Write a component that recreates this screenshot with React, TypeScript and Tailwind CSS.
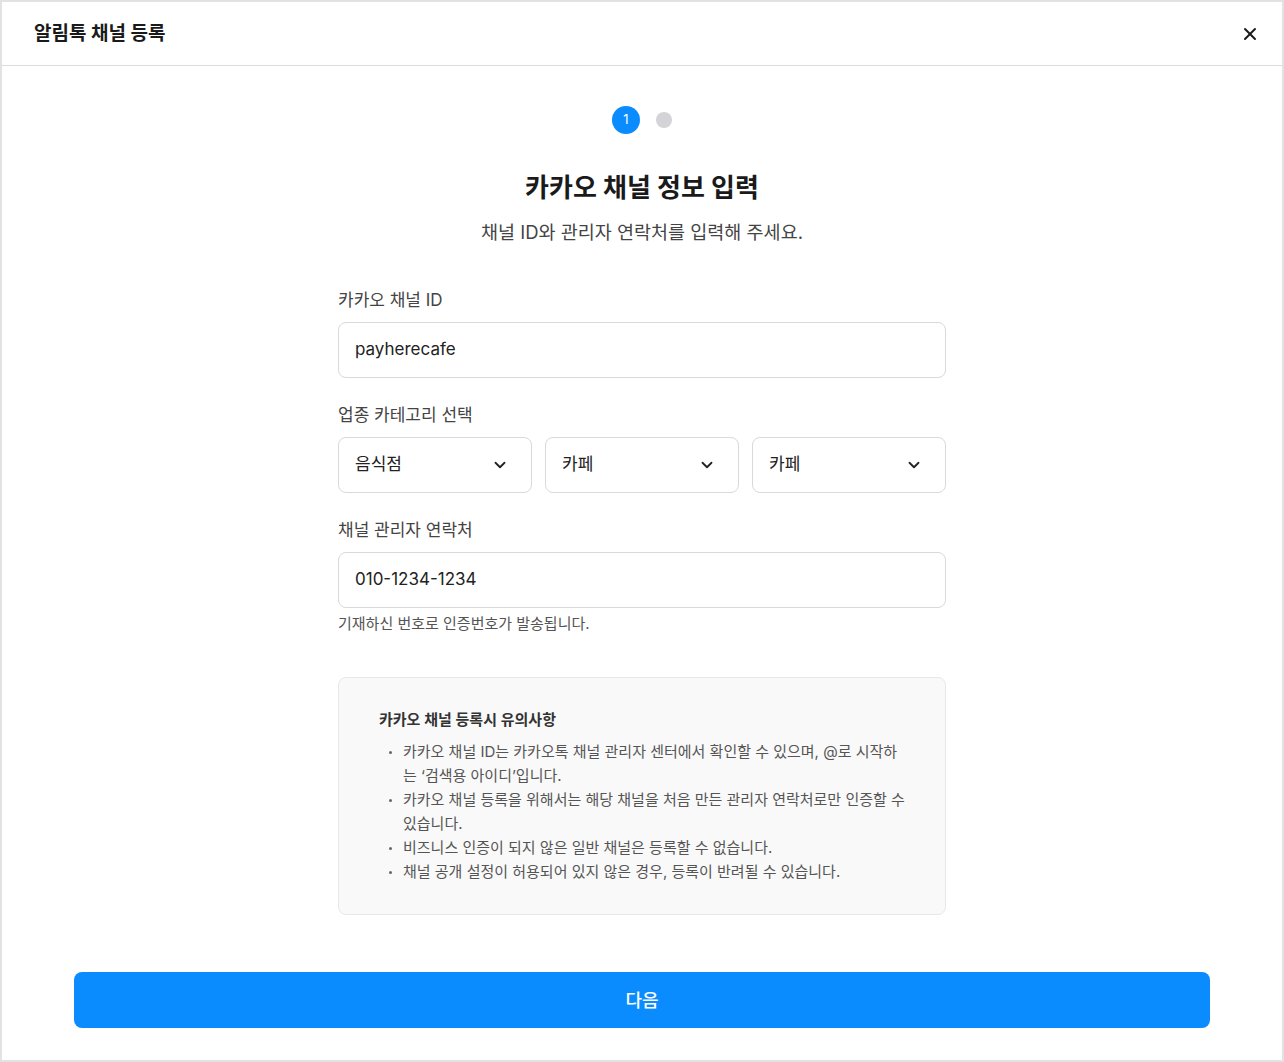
import { ChevronDown, X } from "lucide-react";

const font = { fontFamily: 'Inter, "Noto Sans CJK KR", sans-serif' };

const notices = [
  "카카오 채널 ID는 카카오톡 채널 관리자 센터에서 확인할 수 있으며, @로 시작하는 ‘검색용 아이디’입니다.",
  "카카오 채널 등록을 위해서는 해당 채널을 처음 만든 관리자 연락처로만 인증할 수 있습니다.",
  "비즈니스 인증이 되지 않은 일반 채널은 등록할 수 없습니다.",
  "채널 공개 설정이 허용되어 있지 않은 경우, 등록이 반려될 수 있습니다.",
];

function SelectBox({ value }: { value: string }) {
  return (
    <div className="flex h-14 flex-1 items-center justify-between rounded-lg border border-[#d9d9d9] bg-white pl-4 pr-[22px] text-[17px] text-[#222]">
      <span>{value}</span>
      <ChevronDown size={18} strokeWidth={2.4} className="text-[#222]" />
    </div>
  );
}

function TextField({ value }: { value: string }) {
  return (
    <div className="flex h-14 items-center rounded-lg border border-[#d9d9d9] bg-white px-4 text-[17px] text-[#222]">
      {value}
    </div>
  );
}

export default function App() {
  return (
    <div style={font} className="flex h-[1062px] w-[1284px] flex-col border-2 border-[#e2e2e2] bg-white">
      <header className="flex h-[64px] shrink-0 items-center justify-between border-b border-[#dcdcdc] pl-8 pr-[22px]">
        <div className="pt-[2px] text-[19px] font-bold text-[#1a1a1a]">알림톡 채널 등록</div>
        <X size={20} strokeWidth={2.4} className="text-[#1a1a1a]" />
      </header>

      <div className="flex flex-1 flex-col items-center pt-10">
        <div className="flex items-center gap-4">
          <div className="flex h-7 w-7 items-center justify-center rounded-full bg-[#0a8cff] text-[13px] text-white">1</div>
          <div className="h-4 w-4 rounded-full bg-[#d4d4d8]" />
        </div>

        <div className="mt-[38px] text-[26px] font-bold leading-8 text-[#1a1a1a]">카카오 채널 정보 입력</div>
        <div className="mt-[16px] text-[18.5px] leading-6 text-[#444]">채널 ID와 관리자 연락처를 입력해 주세요.</div>

        <div className="mt-[44px] flex w-[608px] flex-col">
          <div className="text-[17px] leading-6 text-[#444]">카카오 채널 ID</div>
          <div className="mt-[10px]">
            <TextField value="payherecafe" />
          </div>

          <div className="mt-[25px] text-[17px] leading-6 text-[#444]">업종 카테고리 선택</div>
          <div className="mt-[10px] flex gap-[13px]">
            <SelectBox value="음식점" />
            <SelectBox value="카페" />
            <SelectBox value="카페" />
          </div>

          <div className="mt-[25px] text-[17px] leading-6 text-[#444]">채널 관리자 연락처</div>
          <div className="mt-[10px]">
            <TextField value="010-1234-1234" />
          </div>
          <div className="mt-[6px] text-[15px] leading-5 text-[#555]">기재하신 번호로 인증번호가 발송됩니다.</div>

          <div className="mt-[43px] rounded-lg border border-[#e8e8e8] bg-[#f9f9f9] px-10 pb-[30px] pt-[31px]">
            <div className="text-[15px] font-semibold leading-[22px] text-[#333]">카카오 채널 등록시 유의사항</div>
            <ul className="mt-[9px] flex flex-col">
              {notices.map((item) => (
                <li key={item} className="flex text-[15px] leading-6 text-[#555]">
                  <span className="flex h-6 w-6 shrink-0 items-center pl-[10px]">
                    <span className="h-[3px] w-[3px] rounded-full bg-[#666]" />
                  </span>
                  <span>{item}</span>
                </li>
              ))}
            </ul>
          </div>
        </div>

        <div className="mt-auto mb-[32px] flex h-14 w-[1136px] items-center justify-center rounded-lg bg-[#0a8cff] text-[18px] font-medium text-white">
          다음
        </div>
      </div>
    </div>
  );
}
